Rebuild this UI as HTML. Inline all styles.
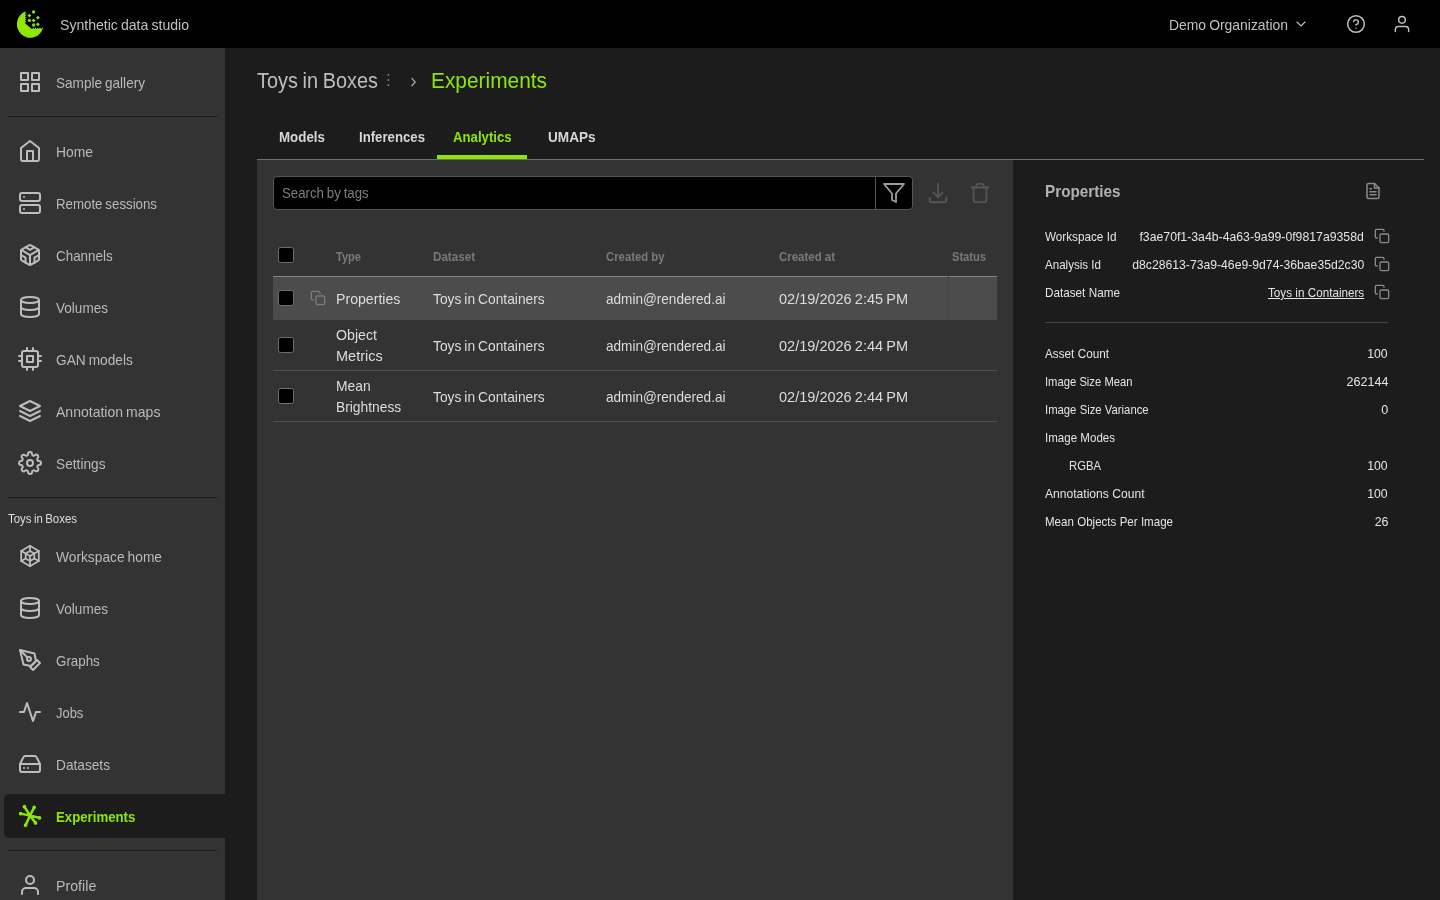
<!DOCTYPE html>
<html lang="en">
<head>
<meta charset="utf-8">
<title>Synthetic data studio</title>
<style>
*{box-sizing:border-box;margin:0;padding:0}
html,body{width:1440px;height:900px;overflow:hidden;background:#1c1c1c;font-family:"Liberation Sans",sans-serif;color:#ddd;word-spacing:-0.055em}
body>div{will-change:transform}
.abs{position:absolute}
.t{position:absolute;white-space:nowrap;line-height:1;transform-origin:0 50%}
#topbar{position:absolute;left:0;top:0;width:1440px;height:48px;background:#000}
#sidebar{position:absolute;left:0;top:48px;width:225px;height:852px;background:#333;overflow:hidden}
.nav{position:absolute;left:0;width:225px;height:44px}
.nav svg{position:absolute;left:18px;top:10px;width:24px;height:24px;stroke:#bdbdbd;fill:none;stroke-width:2;stroke-linecap:round;stroke-linejoin:round}
.nav span{transform-origin:0 50%;position:absolute;left:56px;top:14px;font-size:15px;line-height:17px;color:#bababa;white-space:nowrap}
.nav.active{left:4px;width:221px;background:#1c1c1c;border-radius:5px 0 0 5px}
.nav.active svg{left:14px;stroke:#8fe600}
.nav.active span{left:52px;color:#8fe600;font-weight:bold}
.hr{position:absolute;left:8px;width:209px;height:1px;background:#1c1c1c}
#main{position:absolute;left:225px;top:48px;width:1215px;height:852px;background:#1c1c1c;overflow:hidden}

.tab{font-size:15.500px;font-weight:bold;color:#d6d6d6}
.th{font-size:13px;font-weight:bold;color:#7a7a7a;word-spacing:0}
.td{font-size:15px;color:#ddd}
.pl,.pr{font-size:13px;color:#e4e4e4;word-spacing:0.01em}
.pr{transform-origin:100% 50%}
.cb{position:absolute;width:16px;height:16px;background:#000;border:1px solid #6e6e6e;border-radius:2.500px}
.cp{width:16px;height:16px;fill:none;stroke:#8a8a8a;stroke-width:2;stroke-linecap:round;stroke-linejoin:round}
</style>
<style id="ls">
#brand{transform:scaleX(0.9382)}
#org{transform:scaleX(0.9271)}
#nv0{transform:scaleX(0.9050)}
#nv1{transform:scaleX(0.9246)}
#nv2{transform:scaleX(0.8846)}
#nv3{transform:scaleX(0.8945)}
#nv4{transform:scaleX(0.9036)}
#nv5{transform:scaleX(0.9126)}
#nv6{transform:scaleX(0.9346)}
#nv7{transform:scaleX(0.9151)}
#nv8{transform:scaleX(0.9173)}
#nv9{transform:scaleX(0.9036)}
#nv10{transform:scaleX(0.8902)}
#nv11{transform:scaleX(0.8615)}
#nv12{transform:scaleX(0.9121)}
#nv13{transform:scaleX(0.8807)}
#nv14{transform:scaleX(0.9475)}
#wslabel{transform:scaleX(0.8795)}
#bc1{transform:scaleX(0.9032)}
#bc2{transform:scaleX(0.9486)}
#tab1{transform:scaleX(0.8613)}
#tab2{transform:scaleX(0.8511)}
#tab3{transform:scaleX(0.8502)}
#tab4{transform:scaleX(0.8790)}
#ph{transform:scaleX(0.8820)}
#h1{transform:scaleX(0.8506)}
#h2{transform:scaleX(0.8942)}
#h3{transform:scaleX(0.8720)}
#h4{transform:scaleX(0.8808)}
#h5{transform:scaleX(0.8557)}
#r1a{transform:scaleX(0.9419)}
#r1b{transform:scaleX(0.9183)}
#r1c{transform:scaleX(0.9055)}
#r1d{transform:scaleX(0.9682)}
#r2a1{transform:scaleX(0.9456)}
#r2a2{transform:scaleX(0.9660)}
#r2b{transform:scaleX(0.9183)}
#r2c{transform:scaleX(0.9055)}
#r2d{transform:scaleX(0.9682)}
#r3a1{transform:scaleX(0.9219)}
#r3a2{transform:scaleX(0.9199)}
#r3b{transform:scaleX(0.9183)}
#r3c{transform:scaleX(0.9055)}
#r3d{transform:scaleX(0.9682)}
#ptitle{transform:scaleX(0.8990)}
#p1{transform:scaleX(0.8995)}
#p2{transform:scaleX(0.8889)}
#p3{transform:scaleX(0.9011)}
#s1{transform:scaleX(0.9020)}
#s2{transform:scaleX(0.8626)}
#s3{transform:scaleX(0.8688)}
#s4{transform:scaleX(0.8871)}
#s5{transform:scaleX(0.8685)}
#s6{transform:scaleX(0.9290)}
#s7{transform:scaleX(0.8877)}
#v1{transform:scaleX(0.9435)}
#v2{transform:scaleX(0.9384)}
#v3{transform:scaleX(0.8974)}
#n1{transform:scaleX(0.9446)}
#n2{transform:scaleX(0.9633)}
#n3{transform:scaleX(0.9676)}
#n5{transform:scaleX(0.9446)}
#n6{transform:scaleX(0.9446)}
#n7{transform:scaleX(0.9538)}
</style>
</head>
<body>
<div id="topbar">
  <svg class="abs" style="left:16px;top:9px" width="29" height="30" viewBox="16 9 29 30">
    <path fill="#8fe600" d="M26.40 11.12A13.3 13.65 0 1 0 43.10 27.52L42.30 27.4L41.18 28.9L40.05 27.4L38.93 28.9L37.80 27.4L36.68 28.9L35.55 27.4L34.43 28.9L33.30 27.4L32.18 28.9L31.7 29.1L24.8 22.9L26.4 21.80L24.8 20.70L26.4 19.60L24.8 18.50L26.4 17.40L24.8 16.30L26.4 15.20L24.8 14.10L26.4 13.00L24.8 11.90Z"/>
    <g fill="#8fe600">
      <circle cx="33.6" cy="11.9" r="1.7"/>
      <path d="M29.4 13.7l1.9 1.9-1.9 1.9-1.9-1.9zM37.9 15.8l1.9 1.9-1.9 1.9-1.9-1.9zM33.6 18.5l1.9 1.9-1.9 1.9-1.9-1.9zM37.9 22.4l1.9 1.9-1.9 1.9-1.9-1.9z"/>
      <circle cx="29.4" cy="20.4" r="1.7" fill="#7fd000"/>
      <circle cx="33.6" cy="25.1" r="1.8" fill="#7fd000"/>
    </g>
  </svg>
  <div class="t" id="brand" style="left:60px;top:17px;font-size:15px;color:#c0c0c0">Synthetic data studio</div>
  <div class="t" id="org" style="left:1169px;top:17px;font-size:15px;color:#c0c0c0">Demo Organization</div>
  <svg class="abs" style="left:1293px;top:16px" width="16" height="16" viewBox="0 0 24 24" fill="none" stroke="#bdbdbd" stroke-width="1.700" stroke-linecap="round" stroke-linejoin="round"><path d="m6 9 6 6 6-6"/></svg>
  <svg class="abs" style="left:1346px;top:14px" width="20" height="20" viewBox="0 0 24 24" fill="none" stroke="#bdbdbd" stroke-width="1.800" stroke-linecap="round" stroke-linejoin="round"><circle cx="12" cy="12" r="10"/><path d="M9.090 9a3 3 0 0 1 5.830 1c0 2-3 3-3 3"/><path d="M12 17h.01"/></svg>
  <svg class="abs" style="left:1392px;top:14px" width="20" height="20" viewBox="0 0 24 24" fill="none" stroke="#bdbdbd" stroke-width="1.800" stroke-linecap="round" stroke-linejoin="round"><path d="M20 21v-2a4 4 0 0 0-4-4H8a4 4 0 0 0-4 4v2"/><circle cx="12" cy="7" r="4"/></svg>
</div>
<div id="sidebar">
  <div class="nav" style="top:12px"><svg viewBox="0 0 24 24"><rect x="3" y="3" width="7" height="7"/><rect x="14" y="3" width="7" height="7"/><rect x="14" y="14" width="7" height="7"/><rect x="3" y="14" width="7" height="7"/></svg><span id="nv0">Sample gallery</span></div>
  <div class="hr" style="top:68px"></div>
  <div class="nav" style="top:81px"><svg viewBox="0 0 24 24"><path d="M3 9l9-7 9 7v11a2 2 0 0 1-2 2H5a2 2 0 0 1-2-2z"/><polyline points="9 22 9 12 15 12 15 22"/></svg><span id="nv1">Home</span></div>
  <div class="nav" style="top:133px"><svg viewBox="0 0 24 24"><rect width="20" height="8" x="2" y="2" rx="2" ry="2"/><rect width="20" height="8" x="2" y="14" rx="2" ry="2"/><line x1="6" x2="6.01" y1="6" y2="6"/><line x1="6" x2="6.01" y1="18" y2="18"/></svg><span id="nv2">Remote sessions</span></div>
  <div class="nav" style="top:185px"><svg viewBox="0 0 24 24"><path d="M21 16V8a2 2 0 0 0-1-1.73l-7-4a2 2 0 0 0-2 0l-7 4A2 2 0 0 0 3 8v8a2 2 0 0 0 1 1.73l7 4a2 2 0 0 0 2 0l7-4A2 2 0 0 0 21 16z"/><polyline points="7.5 4.21 12 6.81 16.5 4.21"/><polyline points="7.5 19.79 7.5 14.6 3 12"/><polyline points="21 12 16.5 14.6 16.5 19.79"/><polyline points="3.27 6.96 12 12.01 20.73 6.96"/><line x1="12" x2="12" y1="22.08" y2="12"/></svg><span id="nv3">Channels</span></div>
  <div class="nav" style="top:237px"><svg viewBox="0 0 24 24"><ellipse cx="12" cy="5" rx="9" ry="3"/><path d="M3 5V19A9 3 0 0 0 21 19V5"/><path d="M3 12A9 3 0 0 0 21 12"/></svg><span id="nv4">Volumes</span></div>
  <div class="nav" style="top:289px"><svg viewBox="0 0 24 24"><rect x="4" y="4" width="16" height="16" rx="2" ry="2"/><rect x="9" y="9" width="6" height="6"/><path d="M9 1v3M15 1v3M9 20v3M15 20v3M20 9h3M20 14h3M1 9h3M1 14h3"/></svg><span id="nv5">GAN models</span></div>
  <div class="nav" style="top:341px"><svg viewBox="0 0 24 24"><polygon points="12 2 2 7 12 12 22 7 12 2"/><polyline points="2 17 12 22 22 17"/><polyline points="2 12 12 17 22 12"/></svg><span id="nv6">Annotation maps</span></div>
  <div class="nav" style="top:393px"><svg viewBox="0 0 24 24"><circle cx="12" cy="12" r="3"/><path d="M19.400 15a1.650 1.650 0 0 0 .33 1.820l.06.06a2 2 0 0 1 0 2.830 2 2 0 0 1-2.830 0l-.06-.06a1.650 1.650 0 0 0-1.820-.33 1.650 1.650 0 0 0-1 1.510V21a2 2 0 0 1-2 2 2 2 0 0 1-2-2v-.09A1.650 1.650 0 0 0 9 19.400a1.650 1.650 0 0 0-1.820.33l-.06.06a2 2 0 0 1-2.830 0 2 2 0 0 1 0-2.830l.06-.06a1.650 1.650 0 0 0 .33-1.820 1.650 1.650 0 0 0-1.510-1H3a2 2 0 0 1-2-2 2 2 0 0 1 2-2h.09A1.650 1.650 0 0 0 4.600 9a1.650 1.650 0 0 0-.33-1.820l-.06-.06a2 2 0 0 1 0-2.830 2 2 0 0 1 2.830 0l.06.06a1.650 1.650 0 0 0 1.820.33H9a1.650 1.650 0 0 0 1-1.510V3a2 2 0 0 1 2-2 2 2 0 0 1 2 2v.09a1.650 1.650 0 0 0 1 1.510 1.650 1.650 0 0 0 1.820-.33l.06-.06a2 2 0 0 1 2.830 0 2 2 0 0 1 0 2.830l-.06.06a1.650 1.650 0 0 0-.33 1.820V9a1.650 1.650 0 0 0 1.510 1H21a2 2 0 0 1 2 2 2 2 0 0 1-2 2h-.09a1.650 1.650 0 0 0-1.510 1z"/></svg><span id="nv7">Settings</span></div>
  <div class="hr" style="top:449px"></div>
  <div class="t" id="wslabel" style="left:8px;top:464px;font-size:13px;color:#ddd">Toys in Boxes</div>
  <div class="nav" style="top:486px"><svg viewBox="0 0 24 24"><g stroke-width="1.750"><polygon points="12,1.8 20.8,6.9 20.8,17.1 12,22.2 3.2,17.1 3.2,6.9"/><polygon points="12,7 16.3,9.5 16.3,14.5 12,17 7.7,14.5 7.7,9.5"/><path d="M12 1.8V7M20.8 6.9l-4.5 2.6M20.8 17.1l-4.5-2.6M12 22.2V12M3.2 17.1l4.500-2.600M3.200 6.900l4.500 2.600M12 12L7.700 9.500M12 12l4.300-2.500"/></g></svg><span id="nv8">Workspace home</span></div>
  <div class="nav" style="top:538px"><svg viewBox="0 0 24 24"><ellipse cx="12" cy="5" rx="9" ry="3"/><path d="M3 5V19A9 3 0 0 0 21 19V5"/><path d="M3 12A9 3 0 0 0 21 12"/></svg><span id="nv9">Volumes</span></div>
  <div class="nav" style="top:590px"><svg viewBox="0 0 24 24"><path d="M12 19l7-7 3 3-7 7-3-3z"/><path d="M18 13l-1.500-7.500L2 2l3.500 14.500L13 18l5-5z"/><path d="M2 2l7.586 7.586"/><circle cx="11" cy="11" r="2"/></svg><span id="nv10">Graphs</span></div>
  <div class="nav" style="top:642px"><svg viewBox="0 0 24 24"><path d="M22 12h-4l-3 9L9 3l-3 9H2"/></svg><span id="nv11">Jobs</span></div>
  <div class="nav" style="top:694px"><svg viewBox="0 0 24 24"><line x1="22" x2="2" y1="12" y2="12"/><path d="M5.450 5.110 2 12v6a2 2 0 0 0 2 2h16a2 2 0 0 0 2-2v-6l-3.450-6.890A2 2 0 0 0 16.760 4H7.240a2 2 0 0 0-1.790 1.110z"/><line x1="6" x2="6.010" y1="16" y2="16"/><line x1="10" x2="10.010" y1="16" y2="16"/></svg><span id="nv12">Datasets</span></div>
  <div class="nav active" style="top:746px"><svg viewBox="0 0 24 24"><g stroke-width="2.500"><path d="M12 11.6L6.4 2.7M12 11.6L16.2 3.3M12 11.6L2.7 9.6M12 11.6L21.5 13.8M12 11.6L7.6 21.2M12 11.6L17.5 18.9"/><circle cx="6.4" cy="2.7" r="1.150" fill="#8fe600" stroke-width="1.400"/><circle cx="16.2" cy="3.3" r="1.150" fill="#8fe600" stroke-width="1.400"/><circle cx="2.7" cy="9.6" r="1.150" fill="#8fe600" stroke-width="1.400"/><circle cx="21.5" cy="13.8" r="1.150" fill="#8fe600" stroke-width="1.400"/><circle cx="7.6" cy="21.2" r="1.150" fill="#8fe600" stroke-width="1.400"/><circle cx="17.5" cy="18.9" r="1.150" fill="#8fe600" stroke-width="1.400"/><circle cx="12" cy="11.600" r="1.600" fill="#8fe600" stroke-width="1"/></g></svg><span id="nv13">Experiments</span></div>
  <div class="hr" style="top:802px"></div>
  <div class="nav" style="top:815px"><svg viewBox="0 0 24 24"><path d="M20 21v-2a4 4 0 0 0-4-4H8a4 4 0 0 0-4 4v2"/><circle cx="12" cy="7" r="4"/></svg><span id="nv14">Profile</span></div>
</div>
<div id="main">
  <!-- breadcrumb -->
  <div class="t" id="bc1" style="left:32px;top:22px;font-size:22px;color:#bdbdbd">Toys in Boxes</div>
  <svg class="abs" style="left:161px;top:25px" width="5" height="14" viewBox="0 0 5 14"><g fill="#8c8c8c"><rect x="1.600" y="1.200" width="1.600" height="1.700"/><rect x="1.600" y="6.200" width="1.600" height="1.700"/><rect x="1.600" y="11.200" width="1.600" height="1.700"/></g></svg>
  <svg class="abs" style="left:184px;top:28px" width="8" height="12" viewBox="0 0 8 12"><path d="M2.600 2.200l3.600 3.900L2.600 10" fill="none" stroke="#b0b0b0" stroke-width="1.200"/></svg>
  <div class="t" id="bc2" style="left:206px;top:22px;font-size:22px;color:#8fe600">Experiments</div>
  <!-- tabs -->
  <div class="t tab" id="tab1" style="left:54px;top:81px">Models</div>
  <div class="t tab" id="tab2" style="left:134px;top:81px">Inferences</div>
  <div class="t tab" id="tab3" style="left:228px;top:81px;color:#8fe600">Analytics</div>
  <div class="t tab" id="tab4" style="left:323px;top:81px">UMAPs</div>
  <div class="abs" style="left:32px;top:111px;width:1167px;height:1px;background:#6e6e6e"></div>
  <div class="abs" style="left:212px;top:107px;width:90px;height:4px;background:#8fe600"></div>
  <!-- left panel -->
  <div class="abs" id="lpanel" style="left:32px;top:112px;width:756px;height:740px;background:#333"></div>
  <div class="abs" style="left:48px;top:128px;width:640px;height:34px;background:#000;border:1px solid #555;border-radius:4px"></div>
  <div class="abs" style="left:650px;top:129px;width:1px;height:32px;background:#555"></div>
  <div class="t" id="ph" style="left:57px;top:137px;font-size:15px;color:#7d7d7d">Search by tags</div>
  <svg class="abs" style="left:657px;top:133px" width="24" height="24" viewBox="0 0 24 24" fill="none" stroke="#9c9c9c" stroke-width="1.800" stroke-linecap="round" stroke-linejoin="round"><polygon points="22 3 2 3 10 12.460 10 19 14 21 14 12.460 22 3"/></svg>
  <svg class="abs" style="left:702px;top:134px" width="22" height="22" viewBox="0 0 24 24" fill="none" stroke="#565656" stroke-width="2" stroke-linecap="round" stroke-linejoin="round"><path d="M21 17v3.100a2 2 0 0 1-2 2H5a2 2 0 0 1-2-2V17"/><polyline points="7 11.500 12 16.500 17 11.500"/><line x1="12" x2="12" y1="16.500" y2="1.900"/></svg>
  <svg class="abs" style="left:744px;top:134px" width="22" height="22" viewBox="0 0 24 24" fill="none" stroke="#565656" stroke-width="2" stroke-linecap="round" stroke-linejoin="round"><path d="M3 6h18"/><path d="M19 6v14a2 2 0 0 1-2 2H7a2 2 0 0 1-2-2V6"/><path d="M8 6V4a2 2 0 0 1 2-2h4a2 2 0 0 1 2 2v2"/></svg>
  <!-- table -->
  <div class="abs" style="left:48px;top:229px;width:724px;height:43px;background:#4c4c4c"></div>
  <div class="abs" style="left:48px;top:228px;width:724px;height:1px;background:#858585"></div>
  <div class="abs" style="left:723px;top:228px;width:1px;height:44px;background:#454545"></div>
  <div class="abs" style="left:48px;top:322px;width:724px;height:1px;background:#505050"></div>
  <div class="abs" style="left:48px;top:373px;width:724px;height:1px;background:#505050"></div>
  <div class="cb" style="left:53px;top:199px"></div>
  <div class="cb" style="left:53px;top:242px"></div>
  <div class="cb" style="left:53px;top:289px"></div>
  <div class="cb" style="left:53px;top:340px"></div>
  <svg class="abs" style="left:85px;top:242px" width="16" height="16" viewBox="0 0 24 24" fill="none" stroke="#7a7a7a" stroke-width="2" stroke-linecap="round" stroke-linejoin="round"><rect x="9" y="9" width="13" height="13" rx="2" ry="2"/><path d="M5 15H4a2 2 0 0 1-2-2V4a2 2 0 0 1 2-2h9a2 2 0 0 1 2 2v1"/></svg>
  <div class="t th" id="h1" style="left:111px;top:202px">Type</div>
  <div class="t th" id="h2" style="left:208px;top:202px">Dataset</div>
  <div class="t th" id="h3" style="left:381px;top:202px">Created by</div>
  <div class="t th" id="h4" style="left:554px;top:202px">Created at</div>
  <div class="t th" id="h5" style="left:727px;top:202px">Status</div>
  <div class="t td" id="r1a" style="left:111px;top:243px">Properties</div>
  <div class="t td" id="r1b" style="left:208px;top:243px">Toys in Containers</div>
  <div class="t td" id="r1c" style="left:381px;top:243px">admin@rendered.ai</div>
  <div class="t td" id="r1d" style="left:554px;top:243px">02/19/2026 2:45 PM</div>
  <div class="t td" id="r2a1" style="left:111px;top:279px">Object</div>
  <div class="t td" id="r2a2" style="left:111px;top:300px">Metrics</div>
  <div class="t td" id="r2b" style="left:208px;top:290px">Toys in Containers</div>
  <div class="t td" id="r2c" style="left:381px;top:290px">admin@rendered.ai</div>
  <div class="t td" id="r2d" style="left:554px;top:290px">02/19/2026 2:44 PM</div>
  <div class="t td" id="r3a1" style="left:111px;top:330px">Mean</div>
  <div class="t td" id="r3a2" style="left:111px;top:351px">Brightness</div>
  <div class="t td" id="r3b" style="left:208px;top:341px">Toys in Containers</div>
  <div class="t td" id="r3c" style="left:381px;top:341px">admin@rendered.ai</div>
  <div class="t td" id="r3d" style="left:554px;top:341px">02/19/2026 2:44 PM</div>
  <!-- right panel -->
  <div class="t" id="ptitle" style="left:820px;top:135px;font-size:17px;font-weight:bold;color:#b2b2b2">Properties</div>
  <svg class="abs" style="left:1139px;top:134px" width="18" height="18" viewBox="0 0 24 24" fill="none" stroke="#8a8a8a" stroke-width="2" stroke-linecap="round" stroke-linejoin="round"><path d="M14 2H6a2 2 0 0 0-2 2v16a2 2 0 0 0 2 2h12a2 2 0 0 0 2-2V8z"/><polyline points="14 2 14 8 20 8"/><line x1="16" y1="13" x2="8" y2="13"/><line x1="16" y1="17" x2="8" y2="17"/><polyline points="10 9 9 9 8 9"/></svg>
  <div class="t pl" id="p1" style="left:820px;top:182px">Workspace Id</div>
  <div class="t pl" id="p2" style="left:820px;top:210px">Analysis Id</div>
  <div class="t pl" id="p3" style="left:820px;top:238px">Dataset Name</div>
  <div class="t pr" id="v1" style="right:76px;top:182px">f3ae70f1-3a4b-4a63-9a99-0f9817a9358d</div>
  <div class="t pr" id="v2" style="right:76px;top:210px">d8c28613-73a9-46e9-9d74-36bae35d2c30</div>
  <div class="t pr" id="v3" style="right:76px;top:238px;text-decoration:underline">Toys in Containers</div>
  <svg class="abs cp" style="left:1149px;top:180px" viewBox="0 0 24 24"><rect x="9" y="9" width="13" height="13" rx="2" ry="2"/><path d="M5 15H4a2 2 0 0 1-2-2V4a2 2 0 0 1 2-2h9a2 2 0 0 1 2 2v1"/></svg>
  <svg class="abs cp" style="left:1149px;top:208px" viewBox="0 0 24 24"><rect x="9" y="9" width="13" height="13" rx="2" ry="2"/><path d="M5 15H4a2 2 0 0 1-2-2V4a2 2 0 0 1 2-2h9a2 2 0 0 1 2 2v1"/></svg>
  <svg class="abs cp" style="left:1149px;top:236px" viewBox="0 0 24 24"><rect x="9" y="9" width="13" height="13" rx="2" ry="2"/><path d="M5 15H4a2 2 0 0 1-2-2V4a2 2 0 0 1 2-2h9a2 2 0 0 1 2 2v1"/></svg>
  <div class="abs" style="left:820px;top:274px;width:343px;height:1px;background:#444"></div>
  <div class="t pl" id="s1" style="left:820px;top:299px">Asset Count</div>
  <div class="t pl" id="s2" style="left:820px;top:327px">Image Size Mean</div>
  <div class="t pl" id="s3" style="left:820px;top:355px">Image Size Variance</div>
  <div class="t pl" id="s4" style="left:820px;top:383px">Image Modes</div>
  <div class="t pl" id="s5" style="left:844px;top:411px">RGBA</div>
  <div class="t pl" id="s6" style="left:820px;top:439px">Annotations Count</div>
  <div class="t pl" id="s7" style="left:820px;top:467px">Mean Objects Per Image</div>
  <div class="t pr" id="n1" style="right:52px;top:299px">100</div>
  <div class="t pr" id="n2" style="right:52px;top:327px">262144</div>
  <div class="t pr" id="n3" style="right:52px;top:355px">0</div>
  <div class="t pr" id="n5" style="right:52px;top:411px">100</div>
  <div class="t pr" id="n6" style="right:52px;top:439px">100</div>
  <div class="t pr" id="n7" style="right:52px;top:467px">26</div>
</div>
</body>
</html>
